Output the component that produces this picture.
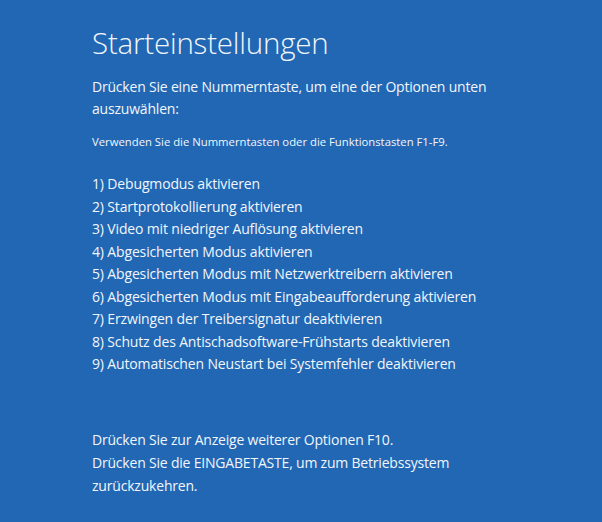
import React from 'react';

const options = [
  'Debugmodus aktivieren',
  'Startprotokollierung aktivieren',
  'Video mit niedriger Auflösung aktivieren',
  'Abgesicherten Modus aktivieren',
  'Abgesicherten Modus mit Netzwerktreibern aktivieren',
  'Abgesicherten Modus mit Eingabeaufforderung aktivieren',
  'Erzwingen der Treibersignatur deaktivieren',
  'Schutz des Antischadsoftware-Frühstarts deaktivieren',
  'Automatischen Neustart bei Systemfehler deaktivieren',
];

export default function App() {
  return (
    <div
      className="w-[602px] h-[522px] bg-[#2167b4] text-[#f2f6fb] pl-[92px] pt-[22px] overflow-hidden"
      style={{ fontFamily: '"Open Sans", "Noto Sans", sans-serif' }}
    >
      <h1 className="text-[29.5px] leading-[42px] font-light tracking-[-0.2px]">Starteinstellungen</h1>
      <p className="mt-[12px] text-[14px] leading-[22px] tracking-[-0.2px] w-[420px]">
        Drücken Sie eine Nummerntaste, um eine der Optionen unten auszuwählen:
      </p>
      <p className="mt-[15px] text-[11.3px] leading-[14px]">
        Verwenden Sie die Nummerntasten oder die Funktionstasten F1-F9.
      </p>
      <ul className="mt-[24px] text-[14px] leading-[22.5px] tracking-[-0.15px]">
        {options.map((o, i) => (
          <li key={i}>
            {i + 1}) {o}
          </li>
        ))}
      </ul>
      <div className="mt-[52px] text-[14px] leading-[23px] tracking-[-0.2px] w-[420px]">
        <p>Drücken Sie zur Anzeige weiterer Optionen F10.</p>
        <p>Drücken Sie die EINGABETASTE, um zum Betriebssystem zurückzukehren.</p>
      </div>
    </div>
  );
}
